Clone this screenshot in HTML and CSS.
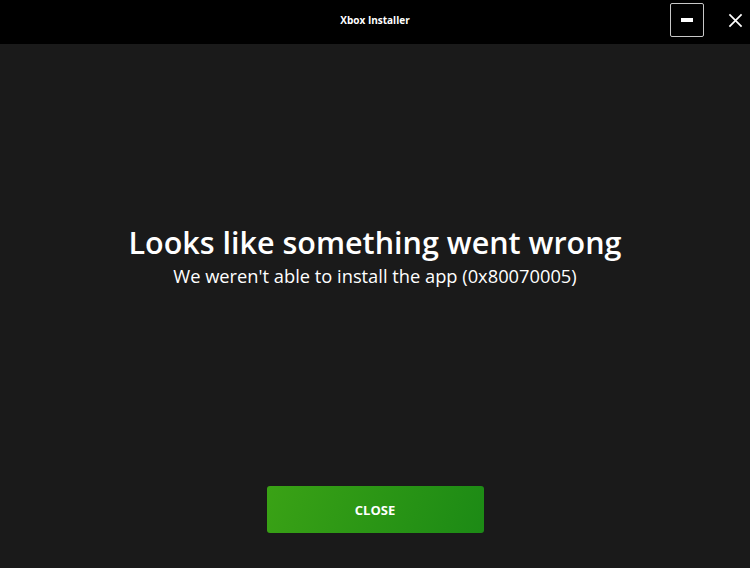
FILE: index.html
```html
<!DOCTYPE html>
<html lang="en">
<head>
    <meta charset="UTF-8">
    <title>Xbox Installer</title>
    <link rel="stylesheet" href="styles.css">
</head>
<body>
    <header class="title-bar">
        <span class="title">Xbox Installer</span>
        <div class="window-controls">
            <button class="min-btn" aria-label="Minimize"><span class="dash"></span></button>
            <button class="close-x" aria-label="Close">
                <svg width="15" height="15" viewBox="0 0 16 16">
                    <path d="M1.5 1.5 L14.5 14.5 M14.5 1.5 L1.5 14.5" stroke="#fff" stroke-width="1.8" fill="none"/>
                </svg>
            </button>
        </div>
    </header>

    <main class="content">
        <div class="message">
            <h1>Looks like something went wrong</h1>
            <p>We weren't able to install the app (0x80070005)</p>
        </div>
        <button class="close-btn">CLOSE</button>
    </main>
</body>
</html>
```

FILE: styles.css
```css
/* General */
html, body {
    margin: 0;
    padding: 0;
    height: 100%;
}

body {
    font-family: 'Open Sans', 'DejaVu Sans', sans-serif;
    background-color: #1a1a1a;
    color: #fff;
    display: flex;
    flex-direction: column;
}

/* Title bar */
.title-bar {
    height: 44px;
    background-color: #000;
    display: flex;
    align-items: center;
    justify-content: center;
    position: relative;
}

.title {
    font-size: 10px;
    font-weight: 700;
    margin-top: -5px;
}

.window-controls {
    position: absolute;
    right: 0;
    top: 0;
    height: 44px;
    display: flex;
    align-items: center;
}

.min-btn {
    width: 34px;
    height: 34px;
    margin-top: -4px;
    background: transparent;
    border: 1px solid #c8c8c8;
    border-radius: 2px;
    display: flex;
    align-items: center;
    justify-content: center;
    padding: 0;
}

.dash {
    width: 12px;
    height: 4px;
    background-color: #fff;
}

.close-x {
    background: transparent;
    border: none;
    width: 46px;
    height: 44px;
    padding: 0 0 0 16px;
    margin-top: -4px;
    display: flex;
    align-items: center;
    justify-content: center;
}

/* Content */
.content {
    flex: 1;
    display: flex;
    flex-direction: column;
    align-items: center;
}

.message {
    margin-top: 178px;
    text-align: center;
}

h1 {
    margin: 0;
    font-size: 30.5px;
    font-weight: 600;
    line-height: 40px;
}

.message p {
    margin: 2px 0 0;
    font-size: 18.3px;
    line-height: 24px;
}

.close-btn {
    margin-top: 198px;
    width: 217px;
    height: 47px;
    border: none;
    border-radius: 3px;
    background: linear-gradient(110deg, #3aa215, #1c8a15);
    color: #fff;
    font-family: inherit;
    font-size: 13px;
    font-weight: 700;
}
```
